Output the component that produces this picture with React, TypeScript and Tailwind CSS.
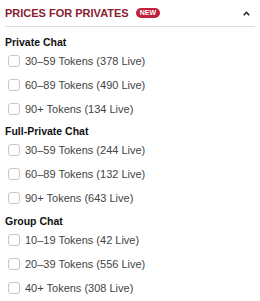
const groups = [
  {
    title: 'Private Chat',
    items: ['30–59 Tokens (378 Live)', '60–89 Tokens (490 Live)', '90+ Tokens (134 Live)'],
  },
  {
    title: 'Full-Private Chat',
    items: ['30–59 Tokens (244 Live)', '60–89 Tokens (132 Live)', '90+ Tokens (643 Live)'],
  },
  {
    title: 'Group Chat',
    items: ['10–19 Tokens (42 Live)', '20–39 Tokens (556 Live)', '40+ Tokens (308 Live)'],
  },
];

const spacing = ['mt-[9px]', 'mt-[4px]', 'mt-[5px]'];

export default function App() {
  return (
    <div className="w-[260px] h-[301px] bg-white overflow-hidden px-[5px] font-['Liberation_Sans',Arial,sans-serif]">
      {/* Header */}
      <div className="flex items-center h-[27px] border-b border-[#dcdcdc]">
        <span className="text-[11px] font-bold text-[#8a1c2e] leading-[13px]">PRICES FOR PRIVATES</span>
        <span className="ml-[7px] h-[10px] px-[4px] rounded-full bg-[#c3213b] text-white text-[7px] font-bold leading-[10px]">
          NEW
        </span>
        <svg className="ml-auto mr-[5px]" width="7" height="5" viewBox="0 0 7 5">
          <path d="M0.8 4.2 L3.5 1.3 L6.2 4.2" fill="none" stroke="#222" strokeWidth="1.6" />
        </svg>
      </div>

      {groups.map((g, i) => (
        <div key={g.title} className={spacing[i]}>
          <div className="text-[10.5px] font-bold text-[#111] leading-[13px]">{g.title}</div>
          <div className="flex flex-col">
            {g.items.map((item) => (
              <label key={item} className="flex items-center h-[24px] pl-[3px]">
                <span className="w-[12px] h-[12px] rounded-[3px] border border-[#c8c8c8] bg-white" />
                <span className="ml-[5px] text-[11px] text-[#444]">{item}</span>
              </label>
            ))}
          </div>
        </div>
      ))}
    </div>
  );
}
